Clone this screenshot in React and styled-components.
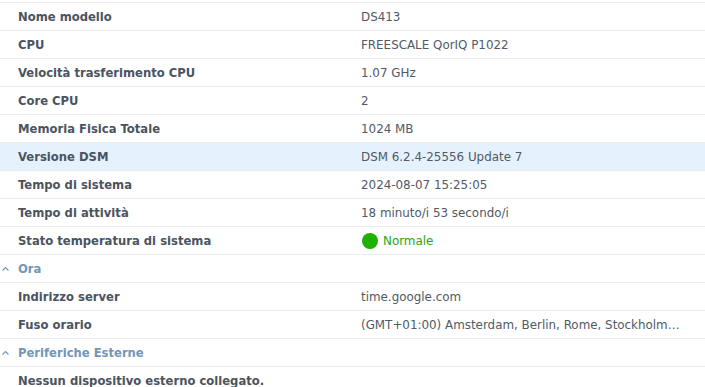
import React from "react";
import styled, { createGlobalStyle } from "styled-components";

const Global = createGlobalStyle`
  html, body { margin: 0; padding: 0; background: #fff; }
  body { font-family: "DejaVu Sans", Verdana, sans-serif; }
`;

const Page = styled.div`
  width: 705px;
  height: 387px;
  overflow: hidden;
  padding-top: 2px;
  box-sizing: border-box;
`;

const Table = styled.div`
  border-top: 1px solid #e8edf1;
  display: flex;
  flex-direction: column;
`;

const Row = styled.div`
  display: grid;
  grid-template-columns: 343px 1fr;
  align-items: center;
  height: 27px;
  border-bottom: 1px solid #e8edf1;
  padding-left: 18px;
  padding-right: 24px;
  background: ${(p) => (p.$active ? "#e5f2fd" : "#fff")};
`;

const Label = styled.div`
  font-size: 11.6px;
  font-weight: bold;
  color: #4a5460;
  white-space: nowrap;
`;

const Value = styled.div`
  font-size: 11.9px;
  color: #505a66;
  white-space: nowrap;
  overflow: hidden;
  text-overflow: ellipsis;
  min-width: 0;
  display: flex;
  align-items: center;
  gap: 5px;
`;

const Ok = styled.span`
  color: #22a812;
`;

const Dot = styled.span`
  width: 16px;
  height: 16px;
  margin-left: 1px;
  border-radius: 50%;
  background: #1fb000;
  flex: none;
`;

const SectionRow = styled.div`
  display: flex;
  align-items: center;
  height: 27px;
  border-bottom: 1px solid #e8edf1;
  font-size: 11.6px;
  font-weight: bold;
  color: #6f97b8;
`;

const Chevron = styled.svg`
  width: 18px;
  height: 10px;
  flex: none;
`;

const Single = styled.div`
  height: 27px;
  display: flex;
  align-items: center;
  padding-left: 18px;
  font-size: 11.6px;
  font-weight: bold;
  color: #4a5460;
`;

const TruncText = styled.span`
  overflow: hidden;
  text-overflow: ellipsis;
  white-space: nowrap;
`;

const general = [
  ["Nome modello", "DS413"],
  ["CPU", "FREESCALE QorIQ P1022"],
  ["Velocità trasferimento CPU", "1.07 GHz"],
  ["Core CPU", "2"],
  ["Memoria Fisica Totale", "1024 MB"],
  ["Versione DSM", "DSM 6.2.4-25556 Update 7", true],
  ["Tempo di sistema", "2024-08-07 15:25:05"],
  ["Tempo di attività", "18 minuto/i 53 secondo/i"],
];

function Section({ title }) {
  return (
    <SectionRow>
      <Chevron viewBox="0 0 18 10">
        <path d="M2.5 6.5 L5.5 3.5 L8.5 6.5" fill="none" stroke="#6f97b8" strokeWidth="1.2" />
      </Chevron>
      {title}
    </SectionRow>
  );
}

export default function App() {
  return (
    <>
      <Global />
      <Page>
        <Table>
          {general.map(([l, v, a]) => (
            <Row key={l} $active={a}>
              <Label>{l}</Label>
              <Value>{v}</Value>
            </Row>
          ))}
          <Row>
            <Label>Stato temperatura di sistema</Label>
            <Value>
              <Dot />
              <Ok>Normale</Ok>
            </Value>
          </Row>
          <Section title="Ora" />
          <Row>
            <Label>Indirizzo server</Label>
            <Value>time.google.com</Value>
          </Row>
          <Row>
            <Label>Fuso orario</Label>
            <Value>
              <TruncText>(GMT+01:00) Amsterdam, Berlin, Rome, Stockholm, Vienna</TruncText>
            </Value>
          </Row>
          <Section title="Periferiche Esterne" />
          <Single>Nessun dispositivo esterno collegato.</Single>
        </Table>
      </Page>
    </>
  );
}
